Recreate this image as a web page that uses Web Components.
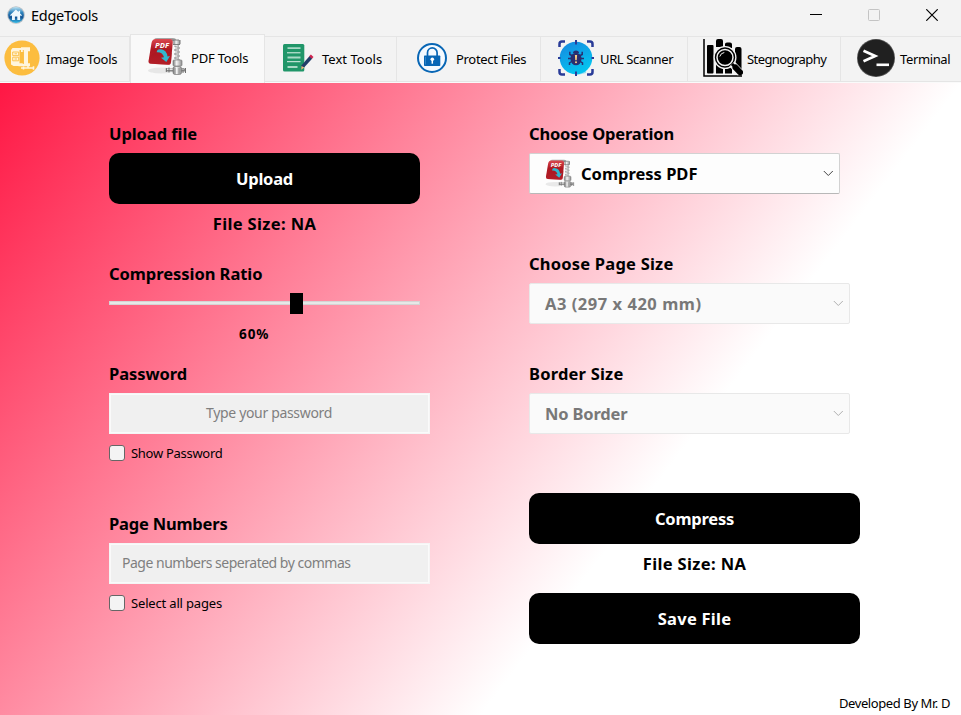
<!DOCTYPE html>
<html lang="en"><head><meta charset="utf-8"><title>EdgeTools</title>
<style>html,body{margin:0;width:961px;height:715px;overflow:hidden}body{font-family:"Noto Sans","DejaVu Sans",sans-serif;color:#000}</style></head>
<body><edge-app></edge-app>
<script>
const ICONS = {
home:`<svg viewBox="0 0 18 18"><defs><linearGradient id="g" x2="0" y2="1"><stop stop-color="#b9e2f3"/><stop offset=".35" stop-color="#2d83bd"/><stop offset=".65" stop-color="#155394"/><stop offset="1" stop-color="#35bce8"/></linearGradient></defs><circle cx="9" cy="9" r="8.8" fill="#b7bfc6"/><circle cx="9" cy="9" r="7.9" fill="url(#g)"/><path d="M3 9.300 8.900 3.600l2.700 2.500V4.800h1.500v2.700L15 9.300l-.9.800-1-.8V14h-2.800v-3.600H7.900V14H5V9.200l-1 .9z" fill="#eef8fd"/></svg>`,
image:`<svg viewBox="0 0 36 36"><circle cx="18" cy="18" r="17.600" fill="#fcbd3f"/><path d="M8.500 8H17v2h-1.500v14H17v2H9.500l-2.500-1.500V10z" fill="#fff5dd"/><path d="M8.700 12h6v3.600h-6zM8.700 17.200h6v3.600h-6zM10.500 13.800h2.500M10.500 19h2.500" stroke="#fcbd3f" stroke-width=".9" fill="none"/><path d="M17 7.300h9v4h-2v12h2v3H14.500v-3h5.200V12H17z" fill="#fff5dd"/><path d="M19.300 10v14" stroke="#fcbd3f"/><path d="M17 28h13M24 26v2M19.500 26.500v3M29.500 26.200v3.600" stroke="#fff5dd" stroke-width="1.600"/></svg>`,
pdf:`<svg viewBox="0 0 40 40"><defs><linearGradient id="r" x2="0" y2="1"><stop stop-color="#dc4850"/><stop offset=".4" stop-color="#ad1721"/><stop offset="1" stop-color="#bd252d"/></linearGradient><linearGradient id="s" x2="1"><stop stop-color="#777"/><stop offset=".4" stop-color="#f4f4f4"/><stop offset="1" stop-color="#8c8c8c"/></linearGradient></defs><ellipse cx="13" cy="33.500" rx="13" ry="3" fill="#dfdfdf" opacity=".7"/><path d="M6 2.300Q7 1 9 1H25q3 0 3 2v6l-2-5z" fill="#a5a6a6"/><path d="M7.600 2H22q3 0 2.800 3L23 25q-.2 3-3 2.800L3 26.800q-2.700-.2-2.400-3L3.500 6Q4.300 2 7.600 2z" fill="url(#r)"/><path d="M2 19Q9 12 24 16l-1 10q-.2 2-3 1.800L3 26.800Q0 26.500.6 24z" fill="#a61720" opacity=".4"/><text x="7" y="11.100" textLength="14" lengthAdjust="spacingAndGlyphs" font-family="Noto Sans" font-size="7.600" font-weight="700" font-style="italic" fill="#fff">PDF</text><path d="M8.700 15.200Q9 11.500 13 12.300q5.500.6 6.500 7.200l2.500-.5-3.700 6-5.300-4.300 3-.4Q14.800 14.800 8.700 15.200z" fill="#31b7ce"/><path d="M25.400 3h6.700v5h-6.700zM27 8h4v19h-4z" fill="url(#s)"/><path d="M26 9l6 2-6 2 6 2-6 2 6 2-6 2 6 2-6 2 6 2" stroke="#aaa" stroke-width="1" fill="none"/><path d="M24 3h7m1 0v4m-7 .5h7" stroke="#777" stroke-width=".9"/><rect x="25" y="23" width="9" height="6" rx="1" fill="url(#s)" stroke="#808080" stroke-width=".7"/><path d="M18 33h19" stroke="#888" stroke-width="3"/><path d="M19 32.500h17" stroke="#e5e5e5"/><path d="M18.300 31v4M21 30.500v5M37.500 31v5M35 31v5" stroke="#707070" stroke-width="1"/><rect x="25" y="29.500" width="8.500" height="8" rx="2" fill="url(#s)" stroke="#777" stroke-width=".7"/><path d="M27 31v6M31 31v6" stroke="#888" stroke-width=".8"/></svg>`,
text:`<svg viewBox="0 0 31 30"><rect x="0" y="1" width="21.300" height="27.500" rx="1.500" fill="#209669"/><path d="M4.500 5.200h13M4.500 14.500h13M4.500 24h10" stroke="#a8d9c6" stroke-width="1.800"/><path d="M4 9.800h13.500M4 18.700h13.500" stroke="#e1f2ec" stroke-width="1"/><path d="M18.200 26.500l.4-4.200L26.600 13l2.700 2.500-8.200 9z" fill="#213d68"/><path d="M26.100 13.200l1.800-1.700 2.600 2.400-1.600 1.800z" fill="#cf244e"/><path d="M18.200 26.700l.3-3.800 2.800 1.600z" fill="#e8bd79"/></svg>`,
lock:`<svg viewBox="0 0 32 32"><circle cx="16" cy="16" r="14" fill="#f5faff" stroke="#0866b5" stroke-width="2"/><path d="M11.500 14v-3.300a4.800 4.800 0 0 1 9.600 0V14" fill="none" stroke="#0866b5" stroke-width="1.700"/><rect x="8" y="13.500" width="16.300" height="10.500" rx=".7" fill="#0866b5"/><circle cx="16.300" cy="17.300" r="1.800" fill="#fff"/><path d="M16.300 17.300v4.400" stroke="#fff" stroke-width="1.500"/><path d="M9.500 15v7.500" stroke="#4192d0" stroke-width=".7"/></svg>`,
url:`<svg viewBox="0 0 36 36"><defs><linearGradient id="b" x1="0" y1="0" x2=".5" y2="1"><stop stop-color="#1685df"/><stop offset="1" stop-color="#05c5f0"/></linearGradient></defs><circle cx="18" cy="18" r="16.300" fill="url(#b)"/><path d="M18 12l11 5-1 16-9 2-9-12z" fill="#07bbed" opacity=".4"/><path d="M1.500 7V4q0-2.500 2.500-2.500H7M29 1.500h3q2.500 0 2.500 2.500v3M34.500 29v3q0 2.500-2.500 2.500H29M7 34.500H4Q1.500 34.500 1.500 32V29" fill="none" stroke="#293b98" stroke-width="2.500"/><path d="M18 0v4.600M18 31.500V36M0 18h2.500M33.500 18H36" stroke="#293b98" stroke-width="2"/><ellipse cx="18" cy="19" rx="5.500" ry="6.300" fill="#292f70"/><path d="M15 13q0-2.500 3-2.500t3 2.500" fill="#292f70"/><path d="M11.800 11.800v2.700l3 1.500M24.200 11.800v2.700l-3 1.500M10 18.500h5M26 18.500h-5M11.500 25V23l3-2M24.500 25V23l-3-2" fill="none" stroke="#292f70" stroke-width="1.500"/><path d="M16.900 15h2.200L18.700 20.300h-1.400z" fill="#ffd083"/><circle cx="18" cy="22.200" r="1" fill="#ffd083"/></svg>`,
steg:`<svg viewBox="0 0 40 38"><path d="M1 0v37h38" fill="none" stroke="#000" stroke-width="1.500"/><rect x="4" y="6" width="6.500" height="28.500" rx="1" /><path d="M13 2q0-2 2-2h3q2 0 2 2v6H13zM22 5q0-1.500 2-1.500h3q2 0 2 2V9h-7zM32 10q0-2 2-2h2.500q2 0 2 2V30H32zM13 13h7v21.500h-7zM22 26h7v8.500h-7z"/><circle cx="22" cy="18.500" r="11.500" fill="#f3f3f3"/><circle cx="22" cy="18.500" r="8.700" fill="#000" stroke="#000" stroke-width="3"/><circle cx="22" cy="18.500" r="8" fill="none" stroke="#f3f3f3" stroke-width="1.500"/><path d="M16.800 17.500a5.500 5.500 0 0 1 4.500-4" fill="none" stroke="#f3f3f3" stroke-width="1"/><path d="M29 25l8.500 9" stroke="#f3f3f3" stroke-width="7.500"/><path d="M29 25l3 3" stroke="#000" stroke-width="3"/><path d="M32.500 28.500l4.500 4.800" stroke="#000" stroke-width="6" stroke-linecap="round"/></svg>`,
term:`<svg viewBox="0 0 38 38"><circle cx="19" cy="19" r="19" fill="#555"/><circle cx="19" cy="19" r="18.200" fill="#202020"/><path d="M6.500 11.800l11.700 5.200-11.700 5.200" fill="none" stroke="#fff" stroke-width="2.700"/><path d="M19.500 25.800H32" stroke="#fff" stroke-width="2.600"/></svg>`,
chevron:`<svg viewBox="0 0 11 7"><path d="M.8 1l4.500 4.500L9.800 1" fill="none" stroke="currentColor" stroke-width="1"/></svg>`
};
function define(name, css, html, ready){
  customElements.define(name, class extends HTMLElement{
    constructor(){super();this.attachShadow({mode:'open'});}
    connectedCallback(){this.shadowRoot.innerHTML='<style>*{box-sizing:border-box}'+css+'</style>'+(typeof html==='function'?html(this):html);if(ready)ready(this);}
  });
}
define('ui-text',':host{display:block;font-size:13px;line-height:20px;white-space:nowrap}span{display:inline-block}','<span><slot></slot></span>',el=>{
  const s=el.shadowRoot.querySelector('span'), w=+el.getAttribute('w');
  if(w){const now=s.getBoundingClientRect().width,n=el.textContent.length;const ls=(w-now)/n;s.style.letterSpacing=ls+'px';}
});
define('ui-icon',':host{display:block;flex:none}svg{display:block;width:100%;height:100%}',e=>ICONS[e.getAttribute('name')]);
define('title-bar',`:host{display:flex;height:36px;background:#f3f3f3;align-items:flex-start;padding:6px 23px 0 7px}
 ui-icon{width:18px;height:18px}.t{font-size:14.500px;margin-left:6px;margin-top:-1px}.c{margin-left:auto;display:flex;gap:46px;align-items:center;height:18px}svg{display:block}`,
 `<ui-icon name="home"></ui-icon><ui-text class="t" w="67">EdgeTools</ui-text><div class="c"><svg width="12" height="12" style="margin-right:1px"><path d="M0 5.500h12" stroke="#000"/></svg><svg width="12" height="12" style="margin-left:-1px"><rect x=".5" y=".5" width="11" height="11" rx="1" fill="none" stroke="#c4c4c4"/></svg><svg width="12" height="12"><path d="M.3.3l11.400 11.400M11.700.3L.3 11.700" stroke="#000" stroke-width="1.200"/></svg></div>`);
define('tab-item',`:host{display:flex;align-items:center;height:46px;flex:none;border:1px solid #e5e5e5;border-left:0;background:#f3f3f3;padding-bottom:2px}
 :host(:first-child){border-right:0}
 :host([active]){height:49px;background:#f9f9f9;border-left:1px solid #e5e5e5;border-bottom:0;padding-bottom:5px}::slotted(ui-text){position:relative;top:1px}`,'<slot></slot>');
const tab=(w,pad,ic,iw,ih,gap,tw,t,a='')=>`<tab-item ${a} style="width:${w}px;padding-left:${pad}px"><ui-icon name="${ic}" style="width:${iw}px;height:${ih}px;margin-right:${gap}px"></ui-icon><ui-text w="${tw-.8}">${t}</ui-text></tab-item>`;
define('tab-bar',`:host{display:flex;height:47px;align-items:flex-start;background:#f3f3f3;border-bottom:1px solid #fafafa}tab-item[active]{margin-top:-2px;z-index:1}`,
 tab(130,4,'image',36,36,6,72,'Image Tools')+tab(135,17,'pdf',40,40,3,58,'PDF Tools','active')+tab(132,18,'text',31,30,8,61,'Text Tools')+tab(144,19,'lock',32,32,8,71,'Protect Files')+tab(147,17,'url',36,36,6,74,'URL Scanner')+tab(153,15,'steg',40,38,4,80,'Stegnography')+tab(121,16,'term',38,38,5,51,'Terminal'));
define('ui-button',`:host{display:flex;height:51px;border-radius:10px;background:#000;color:#fff;align-items:center;justify-content:center}ui-text{font-size:16.500px;font-weight:700}`,e=>`<ui-text w="${e.getAttribute('w')}">${e.getAttribute('label')}</ui-text>`);
define('ui-select',`:host{display:flex;height:41px;align-items:center;background:#fdfdfd;border:1px solid #d2d2d2;border-bottom-color:#b8b8b8;border-radius:2px;padding:0 5px 0 15px;color:#000}
 :host([disabled]){background:#fafafa;border-color:#e8e8e8;color:#787878}ui-text{font-size:16.500px;font-weight:700}.p{width:31px;height:30px;margin-right:5px}.v{width:11px;height:7px;margin-left:auto;color:#444}:host([disabled]) .v{color:#b0b0b0}`,
 e=>`${e.hasAttribute('icon')?'<ui-icon class="p" name="pdf"></ui-icon>':''}<ui-text w="${e.getAttribute('w')}">${e.getAttribute('label')}</ui-text><ui-icon class="v" name="chevron"></ui-icon>`);
define('ui-input',`:host{display:flex;height:41px;align-items:center;background:#f0f0f0;border:2px solid #fafafa;outline:1px solid #eeeeee66;outline-offset:-1px;padding:0 11px 2px;color:#7f7f7f}:host([center]){justify-content:center;padding-right:12px}ui-text{font-size:14px}`,e=>`<ui-text w="${e.getAttribute('w')}">${e.getAttribute('label')}</ui-text>`);
define('ui-check',`:host{display:flex;height:20px;align-items:center;gap:6px}i{width:16px;height:16px;border:1px solid #666;border-radius:3px;background:#f4f4f4}`,e=>`<i></i><ui-text w="${e.getAttribute('w')}">${e.getAttribute('label')}</ui-text>`);
define('ui-slider',`:host{display:grid;grid-template-columns:181px 13px 1fr;height:21px;align-items:start}i{height:4px;margin-top:8px;background:#e7e7e7;border:1px solid #d4d4d4}i:first-of-type{border-right:0}i:last-of-type{border-left:0}b{height:21px;background:#000}`,'<i></i><b></b><i></i>');
define('pdf-panel',`:host{display:grid;grid-template-columns:321px 331px;grid-template-rows:569px 1fr;column-gap:99px;padding:41px 0 0 109px;height:632px;background:linear-gradient(127.250deg,#ff1744 0,#fff 66.700%)}
 section{display:flex;flex-direction:column}.h{font-size:16.500px;font-weight:700;line-height:20px;height:29px}.n{width:311px}.m{width:321px}.f{font-size:16.500px;font-weight:700;text-align:center;height:20px;margin-top:10px}
 footer{grid-column:1/3;justify-self:end;margin-right:-90px;padding-top:0}`,
 `<section><ui-text class="h" w="88">Upload file</ui-text><ui-button class="n" label="Upload" w="57"></ui-button><ui-text class="f n" w="103.500">File Size: NA</ui-text>
 <ui-text class="h" w="153.500" style="margin-top:30px">Compression Ratio</ui-text><ui-slider class="n"></ui-slider><ui-text w="30.500" style="font-weight:700;font-size:13.500px;margin:10px 0 0 130px">60%</ui-text>
 <ui-text class="h" w="78" style="margin-top:20px">Password</ui-text><ui-input center label="Type your password" w="126"></ui-input><ui-check label="Show Password" w="91.500" style="margin-top:9px"></ui-check>
 <ui-text class="h" w="118.500" style="margin-top:51px">Page Numbers</ui-text><ui-input label="Page numbers seperated by commas" w="228.500"></ui-input><ui-check label="Select all pages" w="91" style="margin-top:9px"></ui-check></section>
 <section><ui-text class="h" w="145">Choose Operation</ui-text><ui-select class="n" icon label="Compress PDF" w="116.500"></ui-select>
 <ui-text class="h" w="144.500" style="margin-top:60px">Choose Page Size</ui-text><ui-select class="m" disabled label="A3 (297 x 420 mm)" w="156.500"></ui-select>
 <ui-text class="h" w="94.500" style="margin-top:40px">Border Size</ui-text><ui-select class="m" disabled label="No Border" w="82.500"></ui-select>
 <ui-button label="Compress" w="79" style="margin-top:59px"></ui-button><ui-text class="f" w="103.500">File Size: NA</ui-text><ui-button label="Save File" w="73.500" style="margin-top:19px"></ui-button></section>
 <footer><ui-text w="111">Developed By Mr. D</ui-text></footer>`);
define('edge-app',':host{display:flex;flex-direction:column;width:961px;height:715px;overflow:hidden}','<title-bar></title-bar><tab-bar></tab-bar><pdf-panel></pdf-panel>');
</script></body></html>
